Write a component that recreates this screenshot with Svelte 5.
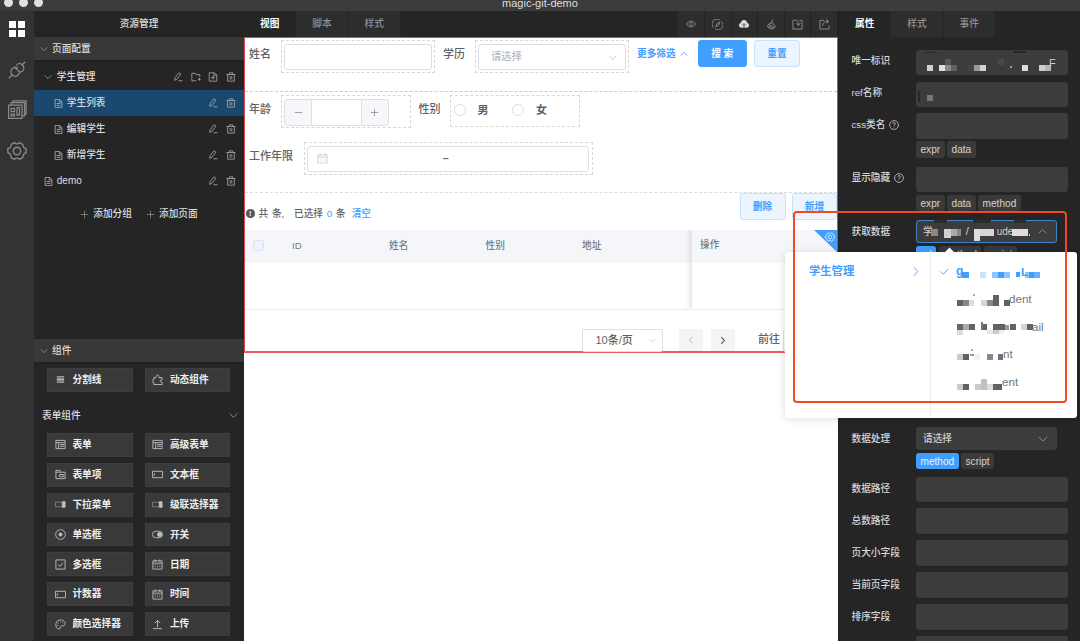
<script lang="ts">
    type Block = [number, number, number, number, string];

    const icons: Record<string, string> = {
        down: "M2 7l10 10L22 7",
        up: "M2 17L12 7l10 10",
        left: "M15 4l-7 8 7 8",
        right: "M9 3l8 9-8 9",
        plus: "M12 2v20M2 12h20",
        minus: "M2 12h20",
        check: "M2 12l7 7L22 5",
        edit: "M4 20l1-6L14 2l5 3-9 12-6 3zM13 21h10",
        folder: "M13 21H2V3h8l2 3h9v5M20 14v7M16.5 17.5h7",
        docAdd: "M3 2h12l6 5v15H3zM14 2v6h7M12 9v9M7.5 13.5h9",
        doc: "M3 1h12l6 6v16H3zM14 1v7h7M7 12h10M7 17h10",
        trash: "M1 6h22M8 6V2h8v4M4 6v16h16V6M10 10v8M14 10v8",
        help: "M12 1.5a10.5 10.5 0 1 0 .01 0M9 9a3 3 0 1 1 4 3l-1 1v2M12 17v1",
        calendar: "M2 4h20v18H2zM2 9h20M7 1v5M17 1v5M6 13h2M11 13h2M16 13h2M6 17h2M11 17h2M16 17h2",
        lines: "M4 6h16M4 9h16M4 12h16M4 15h16M4 18h16",
        puzzle: "M4 8h5c-2-8 8-8 6 0h7v5c-6-1-6 5 0 5v5H4v-5c-6 1-6-6 0-5z",
        table: "M2 3h20v18H2zM2 8h20M8 8v13M11 12h9M11 16h9",
        item: "M2 21V3h8l2 4h10v14zM2 7h10M10 12h8v5h-8z",
        input: "M1 5h22v14H1zM5 9v6",
        radio: "M12 1.5a10.5 10.5 0 1 0 .01 0",
        checkbox: "M2 2h20v20H2zM7 12l4 4 6-8",
        upload: "M12 18V3M6 9l6-6 6 6M2 21h20",
        palette: "M12 2C-1 2-1 21 9 22c5 0 0-7 5-7h5C27 8 18 2 12 2zM6 9h2M11 6h2M16 8h2M5 14h2",
        eye: "M1 12c5-9 17-9 22 0-5 9-17 9-22 0zM12 8a4 4 0 1 0 .01 0",
        compass: "M4 19A10.500 10.500 0 0 1 17 2.500M20 5A10.500 10.500 0 0 1 7 21.500M8 17l3-7 6-3-3 7z",
        brush: "M15 1l-4 9M4 13l8-6 9 9-6 6-11-4zM6 12l13 7M9 15l-3 5M14 17l-3 5",
        importBox: "M7 3H2v19h20V3h-6M7 2c6 0 7 5 7 11M9 9l5 5 4-5",
        exportBox: "M11 3H2v19h20v-8M8 15c0-7 4-10 12-10M15 1l6 4-5 5",
        plug: "M1 23l5-5M18 6l5-5M9 8l7 7-3 4c-5 4-12-3-8-8zM11 6c4-7 13 1 9 7l-4 2M13 8l-3 3",
        board: "M2 6h16v16H2zM5 6V3h16v16h-3M7 3V1h16v16h-2M5 10h4v4H5zM12 9h3v9h-3zM5 17h4v2H5z",
        gear: "M9 2c2 2 4 2 6 0l4 2c0 3 1 5 4 5v5c-3 1-4 3-4 6l-4 2c-2-2-4-2-6 0l-4-2c0-3-1-5-4-6V9c3 0 4-2 4-5zM12 7.5a4.5 4.5 0 1 0 .01 0",
    };

    const pages = [
        { name: "学生列表", nested: true, active: true },
        { name: "编辑学生", nested: true },
        { name: "新增学生", nested: true },
        { name: "demo" },
    ];

    const widgets = [
        ["table", "表单"],
        ["table", "高级表单"],
        ["item", "表单项"],
        ["input", "文本框"],
        ["select", "下拉菜单"],
        ["select", "级联选择器"],
        ["radio", "单选框"],
        ["switch", "开关"],
        ["checkbox", "多选框"],
        ["calendar", "日期"],
        ["input", "计数器"],
        ["calendar", "时间"],
        ["palette", "颜色选择器"],
        ["upload", "上传"],
    ];

    const tools = ["eye", "compass", "cloud", "brush", "importBox", "exportBox"];
    const restFields = ["数据路径", "总数路径", "页大小字段", "当前页字段", "排序字段", ""];

    const idBlocks: Block[] = [
        [10, 2, 11, 1, "#282828"], [97, 1, 13, 2, "#282828"], [20, 25, 10, 1, "#3c3c3c"],
        [11, 15, 6, 6, "#d0d0d0"], [23, 15, 6, 6, "#ddd"], [29, 9, 6, 6, "#555"], [29, 15, 6, 6, "#888"],
        [35, 15, 6, 6, "#626262"], [52, 15, 6, 6, "#444"], [58, 15, 6, 6, "#999"], [64, 15, 6, 6, "#d2d2d2"],
        [82, 9, 6, 6, "#484848"], [94, 16, 2, 2, "#999"], [106, 15, 6, 6, "#ddd"], [123, 15, 6, 6, "#ccc"],
        [129, 15, 6, 6, "#b5b5b5"],
    ];
    const refBlocks: Block[] = [[2, 9, 2, 11, "#282828"], [11, 13, 6, 6, "#777"]];
    const dataBlocks: Block[] = [
        [18, 0, 13, 3, "#2c2c2c"], [57, 0, 18, 3, "#2c2c2c"], [98, 0, 12, 3, "#2c2c2c"],
        [15, 9, 7, 7, "#888"], [28, 9, 7, 9, "#d0d0d0"], [35, 9, 6, 7, "#aaa"], [41, 9, 4, 7, "#888"],
        [58, 9, 6, 12, "#ddd"], [64, 9, 14, 7, "#d5d5d5"], [96, 9, 16, 7, "#ddd"], [113, 14, 1, 2, "#ccc"],
    ];

    const options: { text: string; x: number; blocks: Block[] }[] = [
        {
            text: "L",
            x: 65,
            blocks: [
                [6, 14, 7, 6, "#409eff"], [24, 14, 6, 6, "#c6e2ff"], [36, 14, 6, 6, "#8cc5ff"],
                [42, 14, 6, 6, "#409eff"], [48, 14, 6, 6, "#8cc5ff"], [60, 14, 4, 5, "#409eff"],
                [69, 14, 4, 6, "#8cc5ff"], [73, 14, 5, 6, "#409eff"], [78, 14, 6, 6, "#66b1ff"],
            ],
        },
        {
            text: "dent",
            x: 53,
            blocks: [
                [1, 15, 6, 6, "#606266"], [7, 15, 6, 6, "#888"], [13, 15, 5, 6, "#ddd"],
                [25, 15, 6, 6, "#d5d5d6"], [31, 15, 6, 6, "#88898c"], [37, 10, 6, 11, "#606266"],
                [48, 15, 6, 6, "#606266"], [17, 9, 2, 2, "#aaa"],
            ],
        },
        {
            text: "ail",
            x: 76,
            blocks: [
                [1, 11, 6, 6, "#66676b"], [7, 11, 6, 6, "#aaa"], [13, 11, 6, 6, "#606266"],
                [1, 17, 6, 5, "#ddd"], [25, 9, 2, 8, "#777"], [27, 11, 4, 6, "#606266"],
                [37, 11, 12, 6, "#606266"], [49, 12, 4, 5, "#999"], [54, 11, 6, 6, "#606266"],
                [65, 11, 6, 6, "#d5d5d6"], [71, 11, 6, 6, "#606266"], [31, 17, 6, 4, "#e8e8e8"],
                [37, 17, 6, 4, "#ccc"], [43, 17, 5, 4, "#eee"],
            ],
        },
        {
            text: "nt",
            x: 47,
            blocks: [
                [1, 14, 6, 6, "#ccc"], [7, 14, 6, 6, "#606266"], [15, 9, 2, 2, "#aaa"], [14, 14, 5, 2, "#999"],
                [18, 14, 6, 6, "#f0f0f0"], [31, 14, 6, 6, "#88898c"], [42, 14, 5, 6, "#707276"],
            ],
        },
        {
            text: "ent",
            x: 46,
            blocks: [
                [1, 16, 6, 6, "#ccc"], [7, 16, 6, 6, "#606266"], [19, 16, 6, 6, "#ccc"],
                [25, 11, 6, 11, "#c0c1c4"], [31, 16, 6, 6, "#ddd"], [37, 16, 9, 6, "#606266"],
            ],
        },
    ];
</script>

{#snippet Icon(name: string, size = 10, weight = 1.8)}
    <svg class="icon" width={size} height={size} viewBox="0 0 24 24" fill="none" stroke="currentColor" stroke-width={weight}>
        {#if name === "select"}
            <path d="M1 7h15v10H1z" opacity="0.5" />
            <path d="M16 6h6v12h-6z" fill="currentColor" />
        {:else if name === "switch"}
            <rect x="1" y="5" width="22" height="14" rx="7" />
            <circle cx="16.5" cy="12" r="4.5" fill="currentColor" />
        {:else if name === "cloud"}
            <path d="M6 20a5 5 0 0 1-1-10c1-9 13-9 14 0a5 5 0 0 1-1 10z" fill="currentColor" />
            <path d="M12 22v-9M8 15l4-4 4 4" stroke="#2d2d2d" />
        {:else}
            <path d={icons[name]} />
            {#if name === "radio"}
                <circle cx="12" cy="12" r="3.5" fill="currentColor" />
            {/if}
        {/if}
    </svg>
{/snippet}

{#snippet Mosaic(blocks: Block[], text = "", x = 0, y = 0)}
    <svg class="mosaic" width="140" height="25">
        {#each blocks as [bx, by, w, h, fill]}
            <rect x={bx} y={by} width={w} height={h} {fill} />
        {/each}
        {#if text}
            <text {x} {y}>{text}</text>
        {/if}
    </svg>
{/snippet}

{#snippet Widget(icon: string, name: string)}
    <button class="widget">
        <i>{@render Icon(icon, 11, 2)}</i>
        {name}
    </button>
{/snippet}

{#snippet Tags(tags: string[], active = "")}
    <div class="tags">
        {#each tags as tag}
            <span class:on={tag === active}>{tag}</span>
        {/each}
    </div>
{/snippet}

<div class="window">
    <header class="titlebar">
        <div class="lights"><i></i><i></i><i></i></div>
        <span>magic-git-demo</span>
    </header>

    <main>
        <nav class="rail">
            <div class="squares"><i></i><i></i><i></i><i></i></div>
            {@render Icon("plug", 18, 1.6)}
            {@render Icon("board", 20, 1.5)}
            {@render Icon("gear", 20, 1.6)}
        </nav>

        <aside class="resources">
            <h2>资源管理</h2>
            <h3>{@render Icon("down", 8, 2.4)}页面配置</h3>
            <div class="tree">
                <div class="row group">
                    {@render Icon("down", 8, 2.4)}
                    <span>学生管理</span>
                    {@render Icon("edit")}
                    {@render Icon("folder")}
                    {@render Icon("docAdd")}
                    {@render Icon("trash")}
                </div>
                {#each pages as page}
                    <div class="row" class:nested={page.nested} class:active={page.active}>
                        {@render Icon("doc", 9, 2.2)}
                        <span>{page.name}</span>
                        {@render Icon("edit")}
                        {@render Icon("trash")}
                    </div>
                {/each}
            </div>
            <div class="adders">
                <span>{@render Icon("plus", 9)}添加分组</span>
                <span>{@render Icon("plus", 9)}添加页面</span>
            </div>
            <h3>{@render Icon("down", 8, 2.4)}组件</h3>
            <div class="widgets first">
                {@render Widget("lines", "分割线")}
                {@render Widget("puzzle", "动态组件")}
            </div>
            <h4>表单组件{@render Icon("down", 9, 2.2)}</h4>
            <div class="widgets">
                {#each widgets as [icon, name]}
                    {@render Widget(icon, name)}
                {/each}
            </div>
        </aside>

        <section class="editor">
            <div class="tabs">
                <span class="current">视图</span>
                <span>脚本</span>
                <span>样式</span>
                <div class="tools">
                    {#each tools as tool}
                        <i class:bright={tool === "cloud"}>{@render Icon(tool, tool === "eye" || tool === "cloud" ? 10 : 11)}</i>
                    {/each}
                </div>
            </div>

            <div class="canvas">
                <div class="line one">
                    <span class="caption">姓名</span>
                    <div class="slot"><input aria-label="姓名" /></div>
                    <span class="caption">学历</span>
                    <div class="slot degree">
                        <div class="box">请选择{@render Icon("down", 9, 2)}</div>
                    </div>
                    <a href="#more">更多筛选{@render Icon("up", 8, 2.4)}</a>
                    <button class="btn primary">搜 索</button>
                    <button class="btn">重置</button>
                </div>
                <div class="more">
                    <div class="line two">
                        <span class="caption">年龄</span>
                        <div class="slot age">
                            <div class="stepper">
                                <i>{@render Icon("minus", 9, 2)}</i>
                                <input aria-label="年龄" />
                                <i>{@render Icon("plus", 9, 2)}</i>
                            </div>
                        </div>
                        <span class="caption">性别</span>
                        <div class="slot sex">
                            <i></i><span>男</span>
                            <i></i><span>女</span>
                        </div>
                    </div>
                    <div class="line three">
                        <span class="caption">工作年限</span>
                        <div class="slot years">
                            <div class="box">{@render Icon("calendar", 11, 1.3)}<b>–</b></div>
                        </div>
                    </div>
                </div>

                <div class="summary">
                    <i>!</i>
                    <span>共</span><span>条,</span><span class="picked">已选择</span><em>0</em><span>条</span>
                    <em class="clear">清空</em>
                    <button class="btn">删除</button>
                    <button class="btn">新增</button>
                </div>

                <div class="table">
                    <div class="thead">
                        <i class="tick"></i>
                        <span>ID</span>
                        <span>姓名</span>
                        <span>性别</span>
                        <span>地址</span>
                    </div>
                    <div class="fixed">
                        <div class="cell">操作</div>
                        <div class="corner"></div>
                        <i class="cog">{@render Icon("gear", 10, 1.8)}</i>
                    </div>
                </div>

                <div class="pager">
                    <div class="size">10条/页{@render Icon("down", 7, 2.4)}</div>
                    <button class="dim">{@render Icon("left", 10, 2.4)}</button>
                    <button>{@render Icon("right", 9, 3)}</button>
                    <span>前往</span>
                    <input aria-label="前往" />
                </div>
            </div>
        </section>

        <aside class="props">
            <div class="tabs">
                <span class="current">属性</span>
                <span>样式</span>
                <span>事件</span>
            </div>
            <div class="fields">
                <div class="field">
                    <span>唯一标识</span>
                    <div class="control">{@render Mosaic(idBlocks, "F", 133, 17)}</div>
                </div>
                <div class="field">
                    <span>ref名称</span>
                    <div class="control">{@render Mosaic(refBlocks)}</div>
                </div>
                <div class="field tagged">
                    <span>css类名{@render Icon("help", 10, 1.8)}</span>
                    <div>
                        <div class="control"></div>
                        {@render Tags(["expr", "data"])}
                    </div>
                </div>
                <div class="field tagged">
                    <span>显示隐藏{@render Icon("help", 10, 1.8)}</span>
                    <div>
                        <div class="control"></div>
                        {@render Tags(["expr", "data", "method"])}
                    </div>
                </div>
                <div class="field source">
                    <span>获取数据</span>
                    <div>
                        <div class="control choose focus">
                            学<b>/</b><small>ude</small>
                            {@render Mosaic(dataBlocks)}
                            {@render Icon("up", 9, 2.2)}
                        </div>
                        {@render Tags(["url", "method", "script"], "url")}
                    </div>
                </div>
                <div class="field handler">
                    <span>数据处理</span>
                    <div>
                        <div class="control choose">请选择{@render Icon("down", 10, 2)}</div>
                        {@render Tags(["method", "script"], "method")}
                    </div>
                </div>
                {#each restFields as label}
                    <div class="field rest">
                        <span>{label}</span>
                        <div class="control"></div>
                    </div>
                {/each}
            </div>
        </aside>
    </main>

    <div class="popover">
        <div class="parent">学生管理{@render Icon("right", 11, 2)}</div>
        <ul>
            {#each options as option, i}
                <li class:chosen={i === 0}>
                    {#if i === 0}
                        <i>{@render Icon("check", 9, 2.4)}</i>
                        <b>g</b>
                    {/if}
                    {@render Mosaic(option.blocks, option.text, option.x, 18)}
                </li>
            {/each}
        </ul>
    </div>
    <div class="marker"></div>
</div>

<style>
    :global(body) {
        margin: 0;
        overflow: hidden;
    }

    * {
        box-sizing: border-box;
    }

    .window {
        position: relative;
        width: 1080px;
        height: 641px;
        overflow: hidden;
        background: #252525;
        color: #ddd;
        font: 500 9.7px/1.2 "Liberation Sans", "Noto Sans CJK SC", sans-serif;
        white-space: nowrap;
    }

    button,
    input {
        font: inherit;
        padding: 0;
        border: 0;
        min-width: 0;
    }

    i,
    em {
        font-style: normal;
    }

    .icon {
        display: block;
        flex: none;
    }

    .titlebar {
        display: flex;
        justify-content: center;
        height: 11px;
        background: #3c3c3c;
        font-size: 11px;
        line-height: 7px;
    }

    .lights {
        display: flex;
        gap: 5.4px;
        width: 498px;
        margin: -2px 0 0 -498px;
    }

    .lights i {
        width: 9.4px;
        height: 9.4px;
        border-radius: 50%;
        background: #e0e0e0;
    }

    main {
        display: grid;
        grid-template-columns: 34px 210px 594px 242px;
        height: 630px;
    }

    .rail {
        display: flex;
        flex-direction: column;
        align-items: center;
        gap: 21px;
        padding-top: 10px;
        background: #333;
        color: #8a8a8a;
    }

    .squares {
        display: grid;
        grid-template-columns: 7.5px 7.5px;
        gap: 1.8px;
        margin-bottom: 3px;
    }

    .squares i {
        height: 7.3px;
        background: #fff;
    }

    .resources {
        min-width: 0;
        overflow: hidden;
    }

    h2,
    h3,
    h4 {
        display: flex;
        align-items: center;
        margin: 0;
        font-size: 9.7px;
        font-weight: 500;
    }

    h2 {
        height: 26px;
        justify-content: center;
    }

    h3 {
        height: 23px;
        padding-left: 6px;
        gap: 4px;
        background: #383838;
        box-shadow: 0 1px 2px #1c1c1c;
    }

    h3 .icon,
    h4 .icon,
    .group .icon:first-child {
        color: #999;
    }

    .tree {
        padding-top: 4px;
    }

    .row {
        display: flex;
        align-items: center;
        height: 26px;
        padding: 0 8.5px 0 10px;
        gap: 7.4px;
    }

    .row .icon {
        color: #b4b4b4;
    }

    .row span {
        flex: 1;
        margin-left: -3.6px;
    }

    .group span {
        margin-left: -2.6px;
    }

    .row:last-child span {
        font-size: 10px;
    }

    .row.nested {
        padding-left: 20px;
    }

    .row.active {
        background: #1b486f;
    }

    .adders {
        display: flex;
        justify-content: center;
        height: 145px;
        padding-top: 14px;
        gap: 14px;
    }

    .adders span {
        display: flex;
        align-items: center;
        height: 12px;
        gap: 4px;
    }

    .adders .icon {
        color: #999;
    }

    .widgets {
        display: grid;
        grid-template-columns: 85.5px 85.5px;
        grid-auto-rows: 23.9px;
        column-gap: 12px;
        row-gap: 6px;
        padding-left: 13px;
    }

    .first {
        padding-top: 6px;
    }

    .widget {
        display: flex;
        align-items: center;
        background: #393939;
        border: 1px solid #3e3e3e;
        color: #eee;
        font-weight: 700;
    }

    .widget i {
        width: 24.4px;
        padding-left: 6.6px;
        color: #c0c0c0;
    }

    h4 {
        justify-content: space-between;
        height: 41px;
        padding: 6px 6px 0 8px;
    }

    .tabs {
        display: flex;
        height: 26px;
    }

    .tabs > span {
        display: flex;
        align-items: center;
        justify-content: center;
        width: 52.3px;
        border-right: 1px solid #262626;
        background: #2d2d2d;
        color: #8f8f8f;
    }

    .tabs .current {
        background: none;
        color: #fff;
        font-weight: 700;
    }

    .tools {
        display: flex;
        margin-left: auto;
    }

    .tools i {
        display: grid;
        place-items: center;
        width: 26.6px;
        border-right: 1px solid #232323;
        background: #2d2d2d;
        color: #999;
    }

    .tools .bright {
        color: #ddd;
    }

    .editor {
        background: linear-gradient(#252525 26px, #fff 26px);
    }

    .canvas {
        height: 316px;
        border: 1px solid #d9484f;
        border-bottom: 2px solid #ee5860;
        background: #fff;
        color: #606266;
    }

    .line {
        display: flex;
        align-items: flex-start;
    }

    .one {
        height: 54px;
        padding-top: 2px;
        border-bottom: 1px dashed #ccc;
    }

    .caption {
        flex: none;
        width: 35.5px;
        padding: 7px 0 0 4px;
        font-size: 11px;
        line-height: 14px;
    }

    .slot + .caption {
        width: 39.5px;
        padding-left: 8px;
    }

    .slot {
        flex: none;
        width: 154.5px;
        height: 33px;
        padding: 2.5px;
        border: 1px dashed #d8d8d8;
    }

    .slot > input,
    .box {
        display: flex;
        align-items: center;
        width: 100%;
        height: 26px;
        border: 1px solid #dcdfe6;
        border-radius: 3px;
    }

    .box {
        padding: 2px 8px 0 12px;
        color: #b6b9c0;
        font-size: 10.3px;
    }

    .degree .icon {
        margin-left: auto;
    }

    .one a {
        display: flex;
        align-items: center;
        width: 61px;
        padding: 8px 0 0 8px;
        gap: 4.5px;
        color: #409eff;
        font-weight: 700;
        text-decoration: none;
    }

    .btn {
        flex: none;
        width: 46px;
        height: 26.5px;
        padding-top: 1px;
        border: 1px solid #c6e2ff;
        border-radius: 3px;
        background: #ecf5ff;
        color: #409eff;
        font-weight: 700;
    }

    .one .btn {
        margin-left: 7.5px;
    }

    .one .primary {
        width: 48.5px;
        margin-left: 8px;
        border-color: #409eff;
        background: #409eff;
        color: #fff;
    }

    .more {
        height: 101px;
        padding-top: 3px;
        border-bottom: 1px dashed #ddd;
    }

    .two {
        height: 47px;
    }

    .age {
        width: 130px;
    }

    .stepper {
        display: grid;
        grid-template-columns: 26px 1fr 26px;
        width: 104.5px;
        height: 27px;
        border: 1px solid #dcdfe6;
        border-radius: 3px;
        background: #f5f7fa;
        color: #85888e;
        overflow: hidden;
    }

    .stepper i {
        display: grid;
        place-items: center;
    }

    .stepper input {
        border: solid #dcdfe6;
        border-width: 0 1px;
        background: #fff;
    }

    .sex {
        display: flex;
        align-items: center;
        width: 130px;
        height: 31.5px;
        font-size: 11px;
    }

    .sex i {
        width: 12px;
        height: 12px;
        margin-top: -2px;
        border: 1px solid #dcdfe6;
        border-radius: 50%;
    }

    .sex span {
        width: 46.5px;
        padding-left: 12px;
        font-weight: 700;
    }

    .three .caption {
        width: 58.5px;
    }

    .years {
        width: 289px;
    }

    .years .box {
        padding: 0 0 0 9px;
    }

    .years b {
        margin: 2px 0 0 115px;
        color: #606266;
    }

    .summary {
        display: flex;
        height: 37px;
        line-height: 12px;
    }

    .summary > i {
        width: 8.5px;
        height: 8.5px;
        margin: 16px 4px 0 1px;
        border-radius: 50%;
        background: #55575b;
        color: #fff;
        font-size: 7px;
        font-weight: 700;
        line-height: 9px;
        text-align: center;
    }

    .summary span,
    .summary em {
        margin: 14.5px 3.7px 0 0;
    }

    .summary .picked {
        margin-left: 6px;
    }

    .summary em {
        color: #409eff;
    }

    .summary .clear {
        margin-left: 2.5px;
    }

    .summary .clear + .btn {
        margin: 0 6.5px 0 auto;
    }

    .summary .btn:last-child {
        width: 45px;
    }

    .table {
        display: grid;
        grid-template-columns: 446px 1fr;
        height: 80px;
        border-bottom: 1px solid #ebeef5;
        color: #76797f;
    }

    .thead {
        display: grid;
        grid-template-columns: 47px 97px 96.5px 96.5px 1fr;
        align-items: center;
        height: 32px;
        border-bottom: 1px solid #ebeef5;
        background: #f5f6fa;
    }

    .tick {
        width: 11px;
        height: 11px;
        margin-left: 8px;
        border: 1px solid #dce0eb;
        border-radius: 2px;
        background: #edf2fc;
    }

    .fixed {
        position: relative;
        border-left: 1px solid #e6e8ee;
        box-shadow: -2px 0 5px rgba(0, 0, 0, 0.1);
        clip-path: inset(0 0 0 -10px);
    }

    .cell {
        height: 32px;
        padding-left: 8px;
        border-bottom: 1px solid #ebeef5;
        background: #f5f6fa;
        line-height: 30px;
    }

    .corner {
        position: absolute;
        top: 0;
        right: 0;
        width: 23px;
        height: 22px;
        background: #409eff;
        clip-path: polygon(0 0, 100% 0, 100% 100%);
    }

    .cog {
        position: absolute;
        top: 2px;
        right: 2px;
        color: #fff;
    }

    .pager {
        display: flex;
        align-items: center;
        height: 60px;
        padding-left: 336.5px;
        font-size: 11px;
    }

    .size {
        display: flex;
        align-items: center;
        width: 81px;
        height: 23px;
        margin-right: 16px;
        padding: 1px 6px 0 13px;
        border: 1px solid #dcdfe6;
        border-radius: 2px;
    }

    .size .icon {
        margin-left: auto;
        color: #c0c4cc;
    }

    .pager button {
        display: grid;
        place-items: center;
        width: 24px;
        height: 22px;
        margin-right: 8.3px;
        border-radius: 2px;
        background: #f4f4f5;
        color: #55575b;
    }

    .pager .dim {
        color: #b6b9c0;
    }

    .pager span {
        margin: 0 3px 0 15px;
    }

    .pager input {
        width: 36px;
        height: 23px;
        border: 1px solid #dcdfe6;
        border-radius: 2px;
    }

    .props {
        border-left: 1px solid #1f1f1f;
    }

    .fields {
        padding: 12.7px 12.5px 0;
    }

    .field {
        display: grid;
        grid-template-columns: 64.5px 151.5px;
        align-items: start;
        height: 31.9px;
    }

    .field > span {
        display: flex;
        align-items: center;
        gap: 4px;
        height: 23px;
        color: #d8d8d8;
    }

    .rest > span {
        height: 25px;
    }

    .control {
        position: relative;
        height: 25.6px;
        border-radius: 3px;
        background: #3c3c3c;
    }

    .tagged {
        height: 53.2px;
    }

    .source {
        height: 207px;
    }

    .handler {
        height: 49.7px;
    }

    .choose {
        display: flex;
        align-items: center;
        width: 140.5px;
        height: 23.3px;
        padding: 1px 9px 0 7px;
        color: #d0d0d0;
    }

    .choose > .icon {
        margin-left: auto;
        color: #999;
    }

    .focus {
        padding-left: 6px;
        border: 1px solid #3d84c8;
    }

    .focus b {
        margin-left: 33px;
        font-size: 11px;
        font-weight: 400;
    }

    .focus small {
        margin-left: 28px;
        font-size: 10px;
    }

    .mosaic {
        position: absolute;
        top: 0;
        left: 0;
        fill: #ccc;
        font-size: 11px;
    }

    .focus .mosaic {
        top: -1px;
        left: -1px;
    }

    .tags {
        display: flex;
        gap: 2.4px;
        margin-top: 2.4px;
    }

    .tags span {
        height: 16.4px;
        padding: 0 4.5px;
        border-radius: 3px;
        background: #3a3a3a;
        color: #d4d4d4;
        font-size: 10.1px;
        line-height: 17px;
    }

    .tags .on {
        background: #409eff;
        color: #e8f3ff;
    }

    .popover {
        position: absolute;
        top: 252px;
        left: 785px;
        display: grid;
        grid-template-columns: 146px 1fr;
        width: 292px;
        height: 166px;
        border-radius: 3px;
        background: #fff;
        box-shadow: 0 1px 8px rgba(0, 0, 0, 0.14);
        color: #606266;
    }

    .popover::before {
        content: "";
        position: absolute;
        top: -3px;
        left: 161px;
        width: 7px;
        height: 7px;
        background: #fff;
        transform: rotate(45deg);
    }

    .parent {
        display: flex;
        justify-content: space-between;
        padding: 13px 9px 0 24px;
        border-right: 1px solid #e9ebf0;
        color: #409eff;
        font-size: 11.3px;
        font-weight: 700;
    }

    .parent .icon {
        margin-top: 1px;
    }

    ul {
        margin: 0;
        padding: 6px 0 0 25px;
        list-style: none;
    }

    li {
        position: relative;
        height: 27.4px;
    }

    li b {
        display: block;
        padding-top: 7px;
        font-size: 12px;
        line-height: 13px;
    }

    li i {
        position: absolute;
        top: 9px;
        left: -16px;
    }

    li .mosaic {
        fill: #74767a;
        font-size: 11.6px;
    }

    li.chosen,
    li.chosen .mosaic {
        color: #409eff;
        fill: #409eff;
        font-weight: 700;
    }

    .marker {
        position: absolute;
        top: 210.5px;
        left: 792.5px;
        width: 274.5px;
        height: 192px;
        border: 2px solid #f04a22;
        border-radius: 4px;
    }
</style>
